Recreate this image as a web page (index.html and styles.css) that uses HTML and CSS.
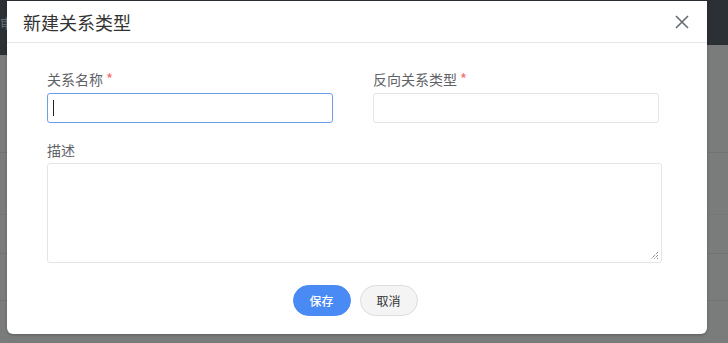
FILE: index.html
```html
<!DOCTYPE html>
<html lang="zh">
<head>
<meta charset="utf-8">
<link rel="stylesheet" href="styles.css">
</head>
<body>
<div class="page">
  <div class="topbar"><span class="topbar-text">审</span></div>
  <div class="rows">
    <div class="row r1"></div>
    <div class="row r2"></div>
    <div class="row r3"></div>
    <div class="row r4"></div>
  </div>
</div>
<div class="modal">
  <div class="modal-header">
    <span class="modal-title">新建关系类型</span>
    <svg class="close" width="14" height="14" viewBox="0 0 14 14"><path d="M1 1L13 13M13 1L1 13" stroke="#646c72" stroke-width="1.6" fill="none"/></svg>
  </div>
  <div class="modal-body">
    <div class="grid">
      <div class="field">
        <label class="label">关系名称<span class="req">*</span></label>
        <div class="input focused"><span class="caret"></span></div>
      </div>
      <div class="field">
        <label class="label">反向关系类型<span class="req">*</span></label>
        <div class="input"></div>
      </div>
    </div>
    <div class="field desc">
      <label class="label">描述</label>
      <div class="textarea">
        <svg class="grip" width="9" height="9" viewBox="0 0 9 9"><path d="M8 1L1 8M8 4L4 8M8 7L7 8" stroke="#555" stroke-width="1" stroke-dasharray="1 1" fill="none"/></svg>
      </div>
    </div>
    <div class="actions">
      <button class="btn primary">保存</button>
      <button class="btn">取消</button>
    </div>
  </div>
</div>
</body>
</html>
```
FILE: styles.css
```css
html, body {
  margin: 0;
  padding: 0;
}
body {
  width: 728px;
  height: 343px;
  overflow: hidden;
  background: #7a7b7b;
  font-family: "Noto Sans CJK SC", "Noto Sans", sans-serif;
  position: relative;
}
.page {
  display: flex;
  flex-direction: column;
}
.topbar {
  height: 45px;
  background: #2a3034;
  position: relative;
}
.topbar::before {
  content: "";
  position: absolute;
  left: 0;
  top: 45px;
  width: 8px;
  height: 10px;
  background: #2a3034;
}
.topbar-text {
  display: block;
  margin: 15px 0 0 0;
  width: 7px;
  overflow: hidden;
  color: #6d7276;
  font-size: 13px;
  line-height: 16px;
  white-space: nowrap;
}
.rows {
  display: flex;
  flex-direction: column;
}
.row { border-bottom: 1px solid #717272; }
.r1 { height: 107px; }
.r2 { height: 61px; border-bottom-style: dotted; }
.r3 { height: 38px; }
.r4 { height: 46px; }

.modal {
  position: absolute;
  left: 7px;
  top: 1px;
  width: 700px;
  height: 333px;
  background: #fff;
  border-radius: 0 0 6px 6px;
  box-shadow: 0 1px 3px rgba(0,0,0,0.25);
  box-sizing: border-box;
}
.modal-header {
  display: flex;
  align-items: center;
  justify-content: space-between;
  height: 41px;
  padding: 0 18px 0 16px;
  border-bottom: 1px solid #e5e5e5;
}
.modal-title {
  font-size: 18px;
  color: #333;
  line-height: 24px;
}
.close {
  display: block;
}
.modal-body {
  padding: 26px 45px 0 40px;
  display: flex;
  flex-direction: column;
}
.grid {
  display: grid;
  grid-template-columns: 286px 286px;
  column-gap: 40px;
}
.field {
  display: flex;
  flex-direction: column;
}
.label {
  font-size: 14px;
  line-height: 20px;
  color: #606266;
  margin-bottom: 4px;
}
.req {
  color: #f56c6c;
  margin-left: 3px;
  font-size: 15px;
}
.input {
  height: 30px;
  box-sizing: border-box;
  border: 1px solid #e4e4e4;
  border-radius: 3px;
  display: flex;
  align-items: center;
}
.input.focused {
  border-color: #6c9fe6;
}
.caret {
  width: 1px;
  height: 16px;
  background: #222;
  margin-left: 5px;
}
.desc {
  margin-top: 17px;
}
.desc .label { margin-bottom: 3px; }
.textarea {
  width: 615px;
  height: 100px;
  box-sizing: border-box;
  border: 1px solid #e4e4e4;
  border-radius: 3px;
  display: flex;
  justify-content: flex-end;
  align-items: flex-end;
}
.grip {
  display: block;
  margin: 0 2px 2px 0;
}
.actions {
  display: flex;
  justify-content: center;
  gap: 9px;
  margin-top: 22px;
  padding-left: 1px;
}
.btn {
  width: 58px;
  height: 31px;
  border-radius: 16px;
  border: 1px solid #dcdcdc;
  background: #f4f4f4;
  color: #333;
  font-family: "Noto Sans CJK SC", sans-serif;
  font-size: 12px;
  padding: 0;
}
.btn.primary {
  background: #4a8af4;
  border-color: #4a8af4;
  color: #fff;
  font-weight: 500;
}
```
